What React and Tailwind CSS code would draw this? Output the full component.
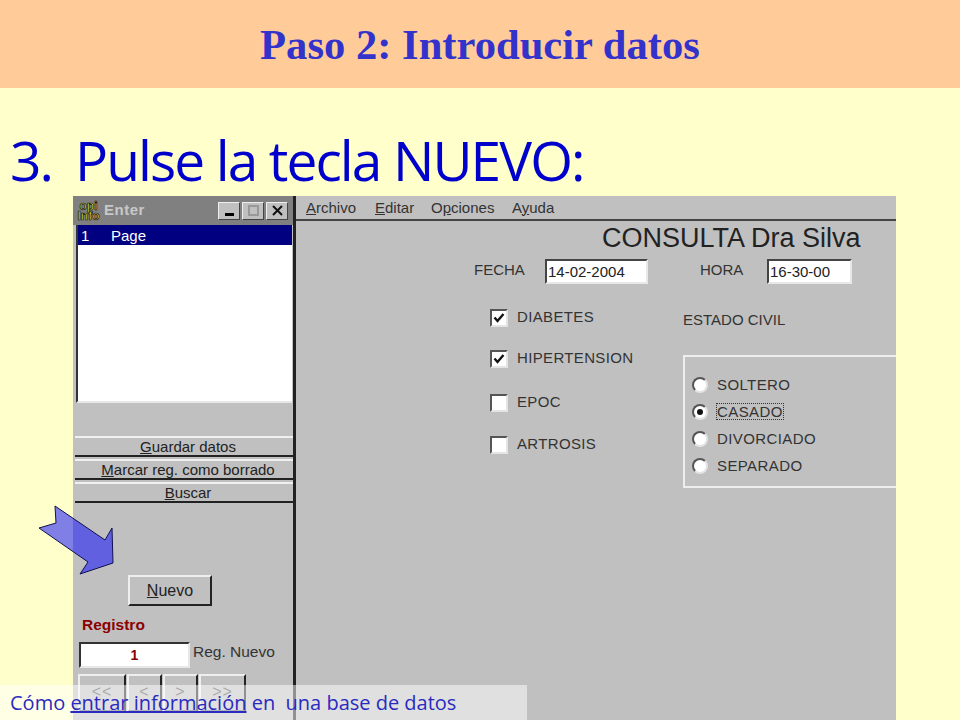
const sans = "font-['Liberation_Sans',Arial,sans-serif]";

function U({ children }) {
  return <span className="underline underline-offset-1">{children}</span>;
}

function SideButton({ children }) {
  return (
    <div className="h-[21px] border-t-2 border-t-[#f0f0f0] border-b-2 border-b-[#222] bg-[#c0c0c0] flex items-center justify-center pl-[8px] text-[15px] leading-none text-[#222]">
      <span>{children}</span>
    </div>
  );
}

function NavButton({ children, w }) {
  return (
    <div className={`${w} h-[38px] border-t-2 border-l-2 border-t-[#eee] border-l-[#eee] border-r-2 border-r-[#222] border-b-2 border-b-[#666] bg-[#c0c0c0] flex justify-center pt-[8px] text-[16px] leading-none text-[#555] tracking-[1px]`}>
      {children}
    </div>
  );
}

function WinBtn({ children }) {
  return (
    <div className="w-[22px] h-[18px] bg-[#c0c0c0] border border-t-[#eee] border-l-[#eee] border-r-[#444] border-b-[#444] flex items-center justify-center">
      {children}
    </div>
  );
}

function Check({ label, checked, mb }) {
  return (
    <div className={`flex items-center gap-[9px] h-[18px] ${mb}`}>
      <div className="w-[18px] h-[18px] bg-white border-2 border-t-[#555] border-l-[#555] border-r-[#e4e4e4] border-b-[#e4e4e4] flex items-center justify-center">
        {checked && (
          <svg width="12" height="12" viewBox="0 0 12 12">
            <path d="M1.5 5.5 L4.5 9 L10.5 2" fill="none" stroke="#111" strokeWidth="2.4" />
          </svg>
        )}
      </div>
      <span className="text-[15px] leading-none text-[#333] tracking-[0.35px] -mt-[3px]">{label}</span>
    </div>
  );
}

function Radio({ label, checked }) {
  return (
    <div className="flex items-center gap-[9px] h-[27px]">
      <div className="w-[16px] h-[16px] rounded-full bg-white border-2 border-t-[#555] border-l-[#555] border-r-[#e4e4e4] border-b-[#e4e4e4] flex items-center justify-center">
        {checked && <div className="w-[6px] h-[6px] rounded-full bg-[#111]" />}
      </div>
      <span className={`text-[15px] leading-none text-[#333] tracking-[0.4px] ${checked ? "outline-1 outline-dotted outline-[#333]" : ""}`}>
        {label}
      </span>
    </div>
  );
}

function Field({ children, w }) {
  return (
    <div className={`${w} h-[25px] bg-white border-2 border-t-[#444] border-l-[#444] border-r-[#e8e8e8] border-b-[#e8e8e8] flex items-center pl-[1px] text-[15px] leading-none text-[#222] whitespace-nowrap`}>
      {children}
    </div>
  );
}

export default function App() {
  return (
    <div className={`relative w-[960px] h-[720px] overflow-hidden bg-[#ffffcc] ${sans}`}>
      <header className="h-[88px] bg-[#ffcc99] flex items-center justify-center">
        <h1 className="font-['Liberation_Serif',serif] font-bold text-[42.6px] leading-none text-[#3333cc] mt-[2px]">
          Paso 2: Introducir datos
        </h1>
      </header>

      <div className="h-[108px] flex items-center pl-[10px] pt-[34px] font-['Open_Sans',sans-serif] text-[55px] tracking-[-1.9px] leading-none text-[#0000cc]">
        <span className="w-[65px]">3.</span>
        <span>Pulse la tecla NUEVO:</span>
      </div>

      <div className="ml-[73px] w-[823px] h-[524px] flex bg-[#c0c0c0]">
        {/* left panel */}
        <aside className="w-[220px] shrink-0 flex flex-col">
          <div className="h-[29px] bg-[#808080] flex items-center pl-[3px] pr-[5px]">
            <div className="w-[25px] leading-[10px] text-[12px] font-bold text-[#e0d840] [-webkit-text-stroke:0.7px_#111] text-center">
              opi<br />Info
            </div>
            <span className="ml-[3px] text-[15px] font-bold text-[#c8c8c8] tracking-[0.5px]">Enter</span>
            <div className="ml-auto flex gap-[2px]">
              <WinBtn><div className="w-[9px] h-[3px] bg-black mt-[8px]" /></WinBtn>
              <WinBtn><div className="w-[11px] h-[11px] border-2 border-[#999]" /></WinBtn>
              <WinBtn>
                <svg width="11" height="11" viewBox="0 0 11 11">
                  <path d="M1 1 L10 10 M10 1 L1 10" stroke="#111" strokeWidth="2" />
                </svg>
              </WinBtn>
            </div>
          </div>
          <div className="ml-[3px] mr-[1px] h-[178px] bg-white border-l-2 border-l-[#333] border-b-2 border-b-[#e8e8e8]">
            <div className="h-[20px] bg-[#000080] text-white text-[15px] leading-[21px] flex">
              <span className="w-[33px] pl-[3px]">1</span>
              <span>Page</span>
            </div>
          </div>

          <div className="mt-[33px] ml-[2px] flex flex-col gap-[2px]">
            <SideButton><U>G</U>uardar datos</SideButton>
            <SideButton><U>M</U>arcar reg. como borrado</SideButton>
            <SideButton><U>B</U>uscar</SideButton>
          </div>

          <div className="mt-[72px] ml-[55px] w-[84px] h-[31px] bg-[#c0c0c0] border-2 border-t-[#eee] border-l-[#eee] border-r-[#222] border-b-[#222] flex items-center justify-center text-[16px] leading-none text-[#222]">
            <span><U>N</U>uevo</span>
          </div>

          <div className="mt-[10px] ml-[9px] text-[15.5px] leading-[17px] font-bold text-[#8b0000]">Registro</div>

          <div className="mt-[9px] ml-[6px] flex">
            <div className="w-[111px] h-[26px] bg-white border-2 border-t-[#333] border-l-[#333] border-r-[#e8e8e8] border-b-[#e8e8e8] flex items-center justify-center text-[14px] font-bold text-[#8b0000] leading-none">
              1
            </div>
            <span className="ml-[3px] text-[15.5px] leading-[19px] text-[#333] whitespace-nowrap">Reg. Nuevo</span>
          </div>

          <div className="mt-[6px] ml-[5px] flex gap-[1px]">
            <NavButton w="w-[48px]">&lt;&lt;</NavButton>
            <NavButton w="w-[35px]">&lt;</NavButton>
            <NavButton w="w-[35px]">&gt;</NavButton>
            <NavButton w="w-[47px]">&gt;&gt;</NavButton>
          </div>
        </aside>

        <div className="w-[3px] shrink-0 bg-[#222]" />

        {/* right panel */}
        <main className="flex-1 min-w-0 flex flex-col">
          <nav className="h-[25px] shrink-0 border-b-2 border-b-[#444] pl-[10px] flex items-center text-[15px] leading-none text-[#333] pb-[1px]">
            <span className="w-[69px]"><U>A</U>rchivo</span>
            <span className="w-[56px]"><U>E</U>ditar</span>
            <span className="w-[81px]">O<U>p</U>ciones</span>
            <span>A<U>y</U>uda</span>
          </nav>

          <div className="mt-[3px] ml-[306px] text-[27px] leading-[28px] whitespace-nowrap text-[#222]">CONSULTA Dra Silva</div>

          <div className="mt-[7px] ml-[178px] flex items-center h-[25px] text-[15px] text-[#333]">
            <span className="w-[71px] -mt-[3px]">FECHA</span>
            <Field w="w-[103px]">14-02-2004</Field>
            <span className="ml-[52px] w-[67px] -mt-[3px]">HORA</span>
            <Field w="w-[85px]">16-30-00</Field>
          </div>

          <div className="mt-[20px] flex">
            <div className="ml-[194px] w-[193px] pt-[5px] flex flex-col">
              <Check label="DIABETES" checked mb="mb-[23px]" />
              <Check label="HIPERTENSION" checked mb="mb-[26px]" />
              <Check label="EPOC" mb="mb-[24px]" />
              <Check label="ARTROSIS" />
            </div>
            <div className="flex-1 flex flex-col">
              <div className="h-[18px] mt-[7px] text-[15px] leading-[18px] text-[#333] whitespace-nowrap">ESTADO CIVIL</div>
              <div className="mt-[26px] h-[133px] border-2 border-r-0 border-t-[#eee] border-l-[#eee] border-b-[#eee] pt-[14px] pl-[7px]">
                <Radio label="SOLTERO" />
                <Radio label="CASADO" checked />
                <Radio label="DIVORCIADO" />
                <Radio label="SEPARADO" />
              </div>
            </div>
          </div>
        </main>
      </div>

      {/* arrow over the screen capture */}
      <svg className="absolute left-[36px] top-[503px]" width="82" height="76" viewBox="36 503 82 76">
        <polygon
          points="55,506 105,540 112,528 113,563 80,574 88,562 39,528 56,523"
          fill="#0000ff"
          fillOpacity="0.5"
          stroke="#101050"
          strokeWidth="1"
        />
      </svg>

      {/* caption over the screen capture */}
      <div className="absolute left-0 top-[685px] w-[527px] h-[35px] bg-white/50 pl-[10px] flex items-center font-['Open_Sans',sans-serif] text-[20px] leading-none text-[#2a2ac0] whitespace-pre">
        Cómo <span className="underline">entrar información</span> en  una base de datos
      </div>
    </div>
  );
}
